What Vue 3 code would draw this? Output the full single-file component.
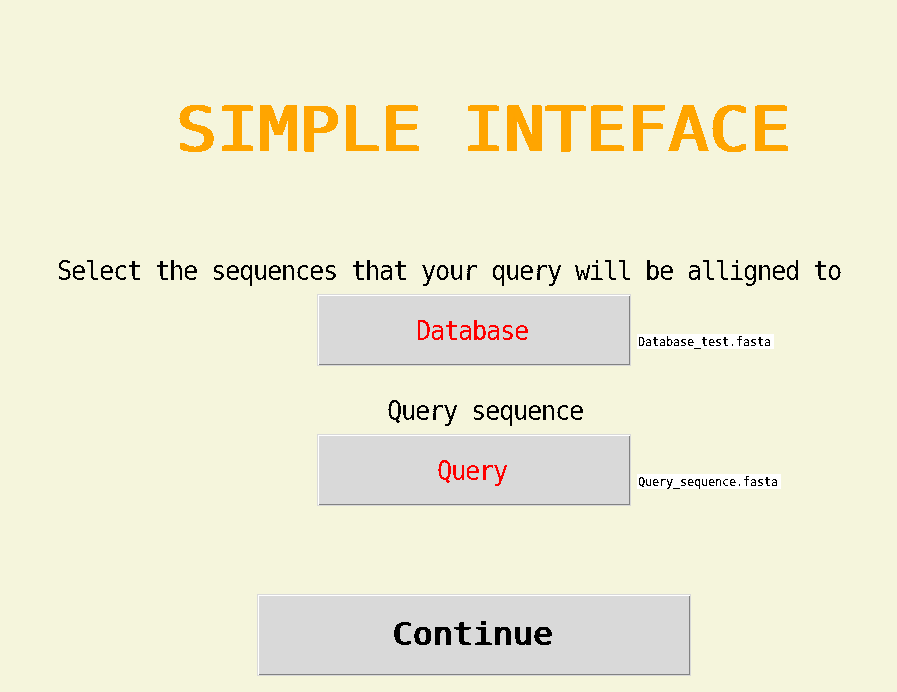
<script setup>
const steps = [
  { id: 'database', label: 'Select the sequences that your query will be alligned to', button: 'Database', file: 'Database_test.fasta' },
  { id: 'query', label: 'Query sequence', button: 'Query', file: 'Query_sequence.fasta' },
]
</script>

<template>
  <main class="window">
    <svg class="defs" width="0" height="0" aria-hidden="true">
      <filter id="crisp" x="0" y="0" width="100%" height="100%" color-interpolation-filters="sRGB">
        <feComponentTransfer><feFuncA type="discrete" tableValues="0 1" /></feComponentTransfer>
      </filter>
      <filter id="crisp-small" x="0" y="0" width="100%" height="100%" color-interpolation-filters="sRGB">
        <feComponentTransfer><feFuncA type="discrete" tableValues="0 0 1 1 1" /></feComponentTransfer>
      </filter>
    </svg>
    <h1 class="title">SIMPLE INTEFACE</h1>
    <section v-for="step in steps" :key="step.id" class="step" :class="step.id">
      <p class="label"><span class="narrow">{{ step.label }}</span></p>
      <div class="row">
        <button class="button"><span class="narrow">{{ step.button }}</span></button>
        <span class="file"><span class="name">{{ step.file }}</span></span>
      </div>
    </section>
    <button class="button continue"><span class="go">Continue</span></button>
  </main>
</template>

<style>
body {
  margin: 0;
  background: #f5f5dc;
}
</style>

<style scoped>
.window {
  box-sizing: border-box;
  width: 897px;
  height: 692px;
  overflow: hidden;
  padding-top: 90px;
  background: #f5f5dc;
  color: #000;
  font-family: "DejaVu Sans Mono", monospace;
}
.defs {
  display: block;
}
.title {
  margin: 0 0 76px 175px;
  height: 80px;
  line-height: 80px;
  font-size: 63px;
  font-weight: 400;
  letter-spacing: 1.12px;
  white-space: pre;
  color: #ffa500;
  text-shadow: 1px 0 #ffa500, 2px 0 #ffa500, 3px 0 #ffa500;
  transform: scaleX(1.05);
  transform-origin: left;
  filter: url(#crisp);
}
.step {
  height: 140px;
}
.label {
  margin: 0;
  padding-left: 57px;
  height: 48px;
  line-height: 50px;
  white-space: pre;
}
.query .label {
  padding-left: 387px;
}
.narrow {
  display: inline-block;
  font-size: 27px;
  letter-spacing: -1.4px;
  transform: scaleX(0.9425);
  transform-origin: left;
  filter: url(#crisp);
}
.row {
  display: flex;
  align-items: flex-start;
  padding-left: 317px;
}
.button {
  display: block;
  box-sizing: border-box;
  width: 314px;
  height: 72px;
  padding: 0 0 0 98px;
  border: 1px solid #d9d9d9;
  border-radius: 0;
  background: #d9d9d9;
  box-shadow: inset 1px 1px #fff, inset -1px -1px #828282;
  color: #f00;
  font-family: inherit;
  line-height: 72px;
  text-align: left;
  white-space: pre;
}
.query .button {
  padding-left: 119px;
}
.file {
  margin: 40px 0 0 6px;
  width: 137px;
  height: 15px;
  background: #fff;
  font-size: 12px;
  line-height: 17px;
  letter-spacing: -0.224px;
  white-space: pre;
}
.query .file {
  width: 144px;
}
.name {
  display: block;
  padding-left: 1px;
  filter: url(#crisp-small);
}
.continue {
  margin: 68px 0 0 257px;
  width: 434px;
  height: 82px;
  padding-left: 134px;
  color: #000;
  line-height: 78px;
}
.go {
  display: inline-block;
  font-size: 31.5px;
  font-weight: 400;
  letter-spacing: 0.3px;
  text-shadow: 1px 0 #000, 2px 0 #000;
  transform: scaleX(1.04);
  transform-origin: left;
  filter: url(#crisp);
}
</style>
